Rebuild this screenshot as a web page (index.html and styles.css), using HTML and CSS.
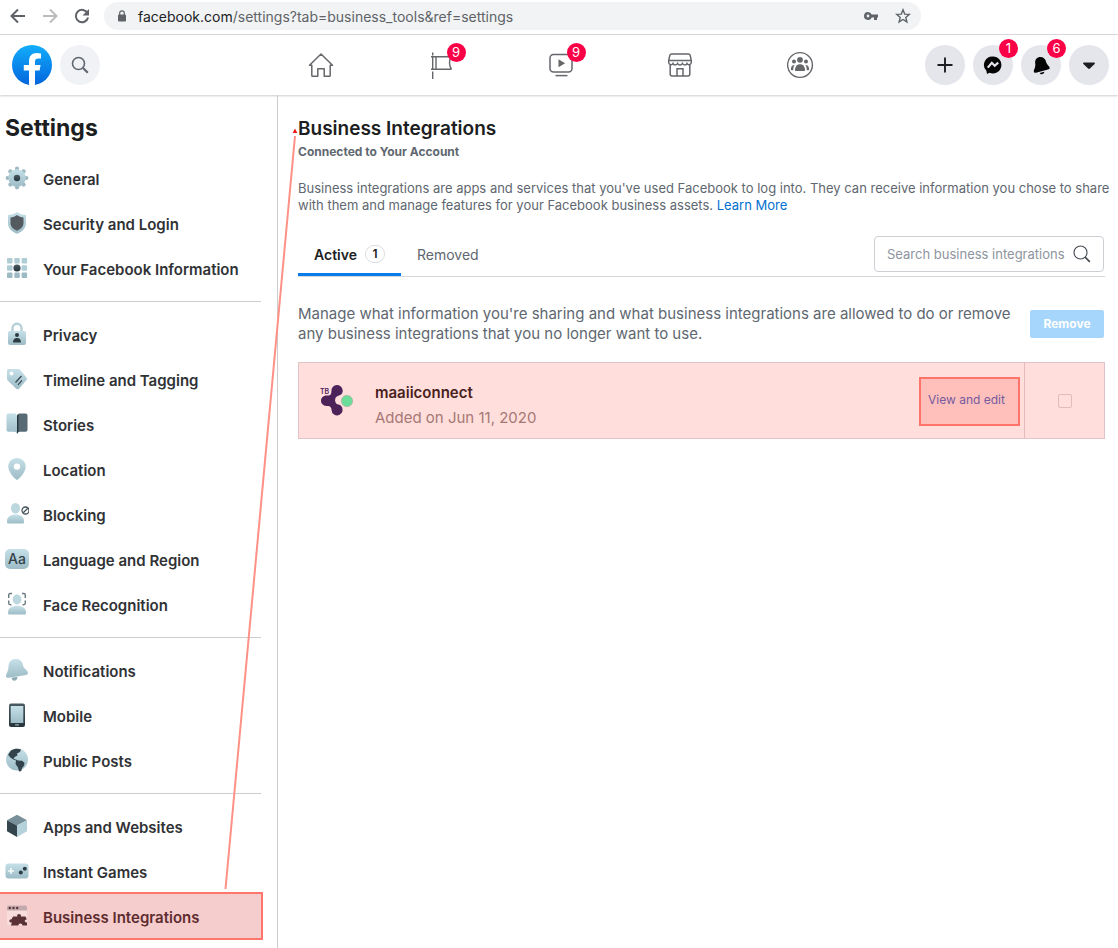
FILE: index.html
```html
<!DOCTYPE html>
<html lang="en">
<head>
<meta charset="utf-8">
<meta name="viewport" content="width=device-width, initial-scale=1">
<title>Settings - Business Integrations</title>
<link rel="stylesheet" href="styles.css">
</head>
<body>
<svg class="defs" width="0" height="0" aria-hidden="true">
  <defs>
    <linearGradient id="ice" x1="0" y1="0" x2="0" y2="1"><stop offset="0" stop-color="#c6e0e8"/><stop offset="1" stop-color="#9dbcc6"/></linearGradient>
    <linearGradient id="dark" x1="0" y1="0" x2="0" y2="1"><stop offset="0" stop-color="#4a5a62"/><stop offset="1" stop-color="#26353c"/></linearGradient>
    <linearGradient id="brand" x1="0" y1="0" x2="0" y2="1"><stop offset="0" stop-color="#12aefb"/><stop offset="1" stop-color="#0365dd"/></linearGradient>
  </defs>
</svg>

<div class="browser">
  <button class="browser-btn" aria-label="Back"><svg width="16" height="16" viewBox="0 0 16 16"><path d="M15 8H2M8 1.500L1.500 8L8 14.500" fill="none" stroke="#5f6368" stroke-width="2"/></svg></button>
  <button class="browser-btn" aria-label="Forward"><svg width="16" height="16" viewBox="0 0 16 16"><path d="M1 8h13M8 1.500L14.500 8L8 14.500" fill="none" stroke="#babcbe" stroke-width="2"/></svg></button>
  <button class="browser-btn" aria-label="Reload"><svg width="16" height="16" viewBox="0 0 16 16"><path d="M13.600 5.200A6.200 6.200 0 1 0 14.100 9.600" fill="none" stroke="#5f6368" stroke-width="2"/><path d="M15 1v6.500H8.500z" fill="#5f6368"/></svg></button>
  <div class="address">
    <svg width="10" height="12" viewBox="0 0 10 12"><rect x="1" y="4.500" width="8" height="7" rx="1" fill="#5f6368"/><path d="M2.700 5V3.100a2.300 2.300 0 0 1 4.600 0V5" fill="none" stroke="#5f6368" stroke-width="1.200"/></svg>
    <span class="url"><b>facebook.com</b>/settings?tab=business_tools&amp;ref=settings</span>
    <svg width="16" height="10" viewBox="0 0 16 10"><path d="M5 1a4 4 0 1 0 3.700 5.500H11V9h3V6.500h1V3.500H8.700A4 4 0 0 0 5 1zm0 2.600a1.400 1.400 0 1 1 0 2.800a1.400 1.400 0 0 1 0-2.800z" fill="#5f6368" fill-rule="evenodd"/></svg>
    <svg width="16" height="16" viewBox="0 0 16 16"><path d="M8 1.800l1.700 4.300 4.600.3-3.500 3 1.100 4.500L8 11.500l-3.900 2.400 1.100-4.500-3.500-3 4.600-.3z" fill="none" stroke="#5f6368" stroke-width="1.400"/></svg>
  </div>
</div>

<header class="topbar">
  <div class="topbar-left">
    <a href="#" aria-label="Facebook"><svg width="40" height="40" viewBox="0 0 40 40"><circle cx="20" cy="20" r="20" fill="url(#brand)"/><path d="M17 39.800V25.600h-5.200V20H17v-3.500C17 10.900 19.800 8 24.800 8c1.500 0 3 .2 4.200.5v4.900h-2.500c-2.700 0-3.500 1.200-3.500 3.300V20h5.600l-1 5.600H23v14.200a20 20 0 0 1-6 0z" fill="#fff"/></svg></a>
    <button class="round search-round" aria-label="Search"><svg width="18" height="18" viewBox="0 0 18 18"><circle cx="7.500" cy="7.500" r="6" fill="none" stroke="#606770" stroke-width="1.600"/><path d="M12 12l4.800 4.800" stroke="#606770" stroke-width="2.200"/></svg></button>
  </div>
  <nav class="topnav" aria-label="Main">
    <a href="#" aria-label="Home"><svg width="28" height="28" viewBox="0 0 28 28" fill="none" stroke="#65676b" stroke-width="1.500" stroke-linejoin="round"><path d="M4.800 14.200H2.500L14 3l11.500 11.200h-2.300v10.200c0 .6-.3.900-.9.900h-5.100v-7.600h-6.400v7.600H5.700c-.6 0-.9-.3-.9-.9z"/></svg></a>
    <a href="#" aria-label="Pages"><svg width="28" height="28" viewBox="0 0 28 28" fill="none" stroke="#65676b" stroke-width="1.400"><path d="M5.700 1.500v3M5.700 6v11.500M5.700 20.500V28M4 5.700h20M4 18.300h20.500M9 5.700v12.600M24 5.700c-2 4-2 8.500.5 12.600"/></svg><span class="badge">9</span></a>
    <a href="#" aria-label="Watch"><svg width="28" height="28" viewBox="0 0 28 28"><rect x="3" y="3.500" width="22" height="17.500" rx="3.500" fill="none" stroke="#65676b" stroke-width="1.500"/><path d="M11.500 8.200v8l6.600-4z" fill="#65676b"/><path d="M8.500 24.600h12" stroke="#65676b" stroke-width="1.500"/></svg><span class="badge">9</span></a>
    <a href="#" aria-label="Marketplace"><svg width="28" height="28" viewBox="0 0 28 28" fill="none" stroke="#65676b" stroke-width="1.500"><path d="M4.500 2.900h17c1 0 1.500.6 1.700 1.500l1.100 5.200v2c0 2.300-3.500 2.800-4.300.9-.9 1.900-3.600 1.900-4.600 0-.9 1.900-3.900 1.900-4.800 0-1 1.900-3.700 1.900-4.600 0-.8 1.900-4.300 1.400-4.300-.9v-2l1.100-5.200c.2-.9.700-1.500 1.700-1.500zM1.700 9.500h22.600M3.200 13.500V23c0 1.200.7 2 1.900 2h15.800c1.200 0 1.900-.8 1.900-2v-9.500M10 25v-7.300h6V25"/></svg></a>
    <a href="#" aria-label="Groups"><svg width="28" height="28" viewBox="1 0 28 28" fill="#65676b"><circle cx="14" cy="14" r="12.400" fill="none" stroke="#65676b" stroke-width="1.400"/><circle cx="14" cy="8.800" r="2.900"/><circle cx="8" cy="10.600" r="2"/><circle cx="20" cy="10.600" r="2"/><path d="M9 19.200c0-3.900 2-6 5-6s5 2.100 5 6c0 .6-.4.900-1 .9h-8c-.6 0-1-.3-1-.9z"/><path d="M8.600 14c-1 1.400-1.400 3-1.400 5.200H5.600c-.5 0-.7-.3-.7-.8 0-2.800 1.400-4.600 3.700-4.400zM19.400 14c1 1.400 1.400 3 1.400 5.200h1.600c.5 0 .7-.3.700-.8 0-2.800-1.400-4.600-3.700-4.400z"/></svg></a>
  </nav>
  <div class="topbar-right">
    <button class="round" aria-label="Create"><svg width="20" height="20" viewBox="0 0 20 20"><path d="M10 3.200v13.600M3.200 10h13.600" stroke="#1c1e21" stroke-width="1.900" stroke-linecap="round"/></svg></button>
    <button class="round" aria-label="Messenger"><svg width="20" height="20" viewBox="0 0 20 20"><path d="M10 1.400a8.500 8.500 0 1 1-3.500 16.300L4 19.100l-.6-3.300A8.500 8.500 0 0 1 10 1.400z" fill="#050505"/><path d="M4.800 12.600l4-4.800 2.900 3 3.500-3.200" fill="none" stroke="#e4e6eb" stroke-width="2.200"/></svg><span class="badge">1</span></button>
    <button class="round" aria-label="Notifications"><svg width="20" height="20" viewBox="0 0 20 20"><g transform="rotate(-8 10 10)"><path d="M4.500 7.500C4.500 3.500 7.500 1.500 10.500 2c3 .4 4.900 2.700 5 6 .1 2.400 2.700 4.200 2.700 6 0 1-1 1.400-2 1.500L4 16.900c-1.200.2-2-.3-2-1.400 0-1.800 2.500-3.500 2.500-8z" fill="#050505"/><path d="M7.600 17.700l4.800-.5c-.5 2.600-4.300 2.600-4.800.5z" fill="#050505"/></g></svg><span class="badge">6</span></button>
    <button class="round" aria-label="Account"><svg width="20" height="20" viewBox="0 0 20 20"><path d="M5 7.500h10c1 0 1.200.9.600 1.500l-4.700 4.600c-.6.500-1.200.5-1.800 0L4.400 9c-.6-.6-.4-1.500.6-1.500z" fill="#1c1e21"/></svg></button>
  </div>
</header>

<div class="page">
  <aside class="sidebar">
    <h2 class="sidebar-title">Settings</h2>
    <ul class="group">
      <li><a href="#"><svg width="24" height="24" viewBox="0 0 24 24"><g fill="#9fb9c3"><circle cx="12" cy="2.700" r="2.100"/><circle cx="12" cy="21.300" r="2.100"/><circle cx="2.700" cy="12" r="2.100"/><circle cx="21.300" cy="12" r="2.100"/><circle cx="5.400" cy="5.400" r="2.100"/><circle cx="18.600" cy="5.400" r="2.100"/><circle cx="5.400" cy="18.600" r="2.100"/><circle cx="18.600" cy="18.600" r="2.100"/></g><circle cx="12" cy="12" r="8.700" fill="url(#ice)"/><circle cx="12" cy="12" r="3.200" fill="url(#dark)"/></svg>General</a></li>
      <li><a href="#"><svg width="24" height="24" viewBox="0 0 24 24"><path d="M12 1c2.500 1.800 5.500 2.900 9 3v8c0 5.500-4 8.800-9 10.700C7 20.800 3 17.500 3 12V4c3.500-.1 6.500-1.200 9-3z" fill="url(#ice)"/><path d="M12 4c2 1.500 4 2.200 6.500 2.400V12c0 3.500-2.500 6-6.500 7.700C8 18 5.500 15.500 5.500 12V6.400C8 6.200 10 5.500 12 4z" fill="#535b61"/></svg>Security and Login</a></li>
      <li><a href="#"><svg width="24" height="24" viewBox="0 0 24 24"><g fill="#b0cdd6"><rect x="2" y="2" width="5.500" height="5.500" rx="1"/><rect x="9.300" y="2" width="5.500" height="5.500" rx="1"/><rect x="16.600" y="2" width="5.500" height="5.500" rx="1"/><rect x="2" y="9.300" width="5.500" height="5.500" rx="1"/><rect x="16.600" y="9.300" width="5.500" height="5.500" rx="1"/></g><g fill="#9dbac4"><rect x="2" y="16.600" width="5.500" height="5.500" rx="1"/><rect x="9.300" y="16.600" width="5.500" height="5.500" rx="1"/><rect x="16.600" y="16.600" width="5.500" height="5.500" rx="1"/></g><circle cx="12" cy="12" r="3.600" fill="url(#dark)"/></svg>Your Facebook Information</a></li>
    </ul>
    <ul class="group">
      <li><a href="#"><svg width="24" height="24" viewBox="0 0 24 24"><path d="M7.500 10V6.200a4.500 4.500 0 0 1 9 0V10" fill="none" stroke="#b6d0d9" stroke-width="2.400"/><rect x="3" y="9" width="18" height="14" rx="2" fill="url(#ice)"/><circle cx="12" cy="13" r="2" fill="#2d3b42"/><path d="M8 20.500c0-3.200 1.600-4.500 4-4.500s4 1.300 4 4.500z" fill="#2d3b42"/></svg>Privacy</a></li>
      <li><a href="#"><svg width="24" height="24" viewBox="0 0 24 24"><path d="M2 4c0-1.400.8-2 2-2h9c1 0 1.600.4 2.200 1l6.200 7.500c.8 1 .8 1.800 0 2.700L14 21.700c-.9.800-1.900.8-2.800 0L3.200 14c-.7-.6-1.200-1.200-1.200-2.200z" fill="url(#ice)"/><circle cx="6.500" cy="6.500" r="1.900" fill="#fff"/><path d="M10.500 15.500l6-6.500M13 17.800l4-4.500" stroke="#34444c" stroke-width="1.200"/></svg>Timeline and Tagging</a></li>
      <li><a href="#"><svg width="24" height="24" viewBox="0 0 24 24"><path d="M3.500 1.500H9c2 0 3 1 3 3V22c-.5-1.500-1.500-2.300-3-2.300H3.500c-1.200 0-2-.7-2-2V3.500c0-1.300.8-2 2-2z" fill="url(#ice)"/><path d="M20.500 1.500H15c-2 0-3 1-3 3V22c.5-1.500 1.500-2.300 3-2.300h5.500c1.200 0 2-.7 2-2V3.500c0-1.300-.8-2-2-2z" fill="#586a73"/><path d="M12 4.500c0-1 .6-1.800 1.400-2.300V20c-.8.500-1 1-1.400 2z" fill="#26353c"/></svg>Stories</a></li>
      <li><a href="#"><svg width="24" height="24" viewBox="0 0 24 24"><path d="M12 1c5 0 8.700 3.700 8.700 8.600 0 5.400-5.200 10.700-7.500 12.700-.8.700-1.600.7-2.400 0-2.300-2-7.500-7.300-7.500-12.700C3.300 4.700 7 1 12 1zm0 5.400a3.200 3.200 0 1 0 0 6.400a3.200 3.200 0 0 0 0-6.400z" fill="url(#ice)" fill-rule="evenodd"/></svg>Location</a></li>
      <li><a href="#"><svg width="24" height="24" viewBox="0 0 24 24"><ellipse cx="10.500" cy="6.200" rx="4.600" ry="5.200" fill="#bdd7df"/><path d="M2 19c0-4.300 3.700-6.500 8.500-6.500s8.500 2.200 8.500 6.500v1c0 1-.6 1.500-1.600 1.500H3.600C2.600 21.500 2 21 2 20z" fill="url(#ice)"/><circle cx="20.500" cy="8.500" r="3.500" fill="#fff" stroke="#46555d" stroke-width="1.300"/><path d="M18.200 10.800l4.600-4.600" stroke="#46555d" stroke-width="1.300"/></svg>Blocking</a></li>
      <li><a href="#"><span class="aa">Aa</span>Language and Region</a></li>
      <li><a href="#"><svg width="24" height="24" viewBox="0 0 24 24"><path d="M3.700 6V3.200c0-1 .6-1.700 1.700-1.700H7M3.700 8.500V11c0 1 .6 1.700 1.700 1.700h1M17 1.500h1.600c1.100 0 1.700.7 1.700 1.700V6M20.300 8.500V11c0 1-.6 1.700-1.700 1.700h-1" fill="none" stroke="#687980" stroke-width="1.400"/><ellipse cx="12" cy="7.500" rx="4.400" ry="5" fill="#bdd7df"/><path d="M3 20.500c0-4.500 4.200-6.700 9-6.700s9 2.200 9 6.700v.5c0 1-.6 1.500-1.600 1.500H4.600c-1 0-1.600-.5-1.600-1.500z" fill="url(#ice)"/></svg>Face Recognition</a></li>
    </ul>
    <ul class="group">
      <li><a href="#"><svg width="24" height="24" viewBox="0 0 24 24"><path d="M3.500 8.500C3.500 4 6.500 1 10.500 1c4.500 0 7 2.500 7.500 6.500.5 3.200 5 4.500 5 7.500 0 1.200-1 1.800-2 2L3.500 19.700C2 20 1 19.300 1 18c0-2.300 2.500-4.500 2.500-9.500z" fill="url(#ice)"/><path d="M6.500 19.700l6-1c0 5-5.500 5.300-6 1z" fill="#8eabb5"/></svg>Notifications</a></li>
      <li><a href="#"><svg width="24" height="24" viewBox="0 0 24 24"><rect x="4" y=".5" width="16" height="23.500" rx="2" fill="url(#dark)"/><rect x="5.700" y="3" width="12.600" height="17" fill="url(#ice)"/><rect x="10" y="21.300" width="4" height="1.300" rx=".6" fill="#9db0b7"/></svg>Mobile</a></li>
      <li><a href="#"><svg width="24" height="24" viewBox="0 0 24 24"><circle cx="12" cy="11.500" r="11" fill="url(#ice)"/><path d="M6 2.500c3-2 7-2.500 10-1l-1 2.500-3 1.500.5 2-2.500 1.200-1.500 2 3 1 1.500.8 4 .2 2.500 2-.5 3-2 2.300-.7 3-2.300.5-1-4-2.500-3.500.5-3.500C7.500 11.500 4 9 3.200 6.500z" fill="#33434b"/></svg>Public Posts</a></li>
    </ul>
    <ul class="group">
      <li><a href="#"><svg width="24" height="24" viewBox="0 0 24 24"><path d="M12 .8l10 5.500L12 11.500L2 6.300z" fill="#789099"/><path d="M2 6.300l10 5.200V23L2 17.200z" fill="#35454d"/><path d="M22 6.300l-10 5.200V23l10-5.800z" fill="#b5d2db"/></svg>Apps and Websites</a></li>
      <li><a href="#"><svg width="24" height="24" viewBox="0 0 24 24"><rect x=".5" y="4.500" width="23" height="15" rx="3" fill="url(#ice)"/><path d="M6 9v6M3 12h6" stroke="#f4fafb" stroke-width="1.600"/><circle cx="15.800" cy="13.500" r="2" fill="#2f3e46"/><circle cx="19.800" cy="9.700" r="2" fill="#2f3e46"/></svg>Instant Games</a></li>
      <li><a href="#" class="selected" aria-current="page"><svg width="24" height="24" viewBox="0 0 24 24"><rect x="2" y="1.500" width="20" height="20" rx="2" fill="#f8dcdb"/><path d="M2 6.500v-3c0-1.200.8-2 2-2h16c1.200 0 2 .8 2 2v3z" fill="#c3a9ad"/><g fill="#5a3236"><circle cx="4.800" cy="4" r="1.200"/><circle cx="8.500" cy="4" r="1.200"/><circle cx="12.200" cy="4" r="1.200"/><path d="M8 12.500h4.300c-1.200-3.200 4.600-3.200 3.600 0h4.600l1.300 3c-2.700-.2-2.700 3 .2 3v3h-4.500c-.2-2.700-4-2.700-4.200 0H5.800l1.200-3c-3.300.6-3.600-3.200-.5-3.200z"/></g></svg>Business Integrations</a></li>
    </ul>
  </aside>

  <main class="content">
    <h1>Business Integrations</h1>
    <p class="subtitle">Connected to Your Account</p>
    <p class="intro">Business integrations are apps and services that you've used Facebook to log into. They can receive information you chose to share with them and manage features for your Facebook business assets. <a href="#">Learn More</a></p>

    <div class="tabs">
      <button class="tab active">Active <span class="count">1</span></button>
      <button class="tab">Removed</button>
      <label class="search">
        <input type="text" placeholder="Search business integrations" aria-label="Search business integrations">
        <svg width="18" height="18" viewBox="0 0 18 18" fill="none" stroke="#444950"><circle cx="7.500" cy="7.500" r="6.500" stroke-width="1.100"/><path d="M12 12l4.800 4.800" stroke-width="1.700"/></svg>
      </label>
    </div>

    <div class="manage">
      <p>Manage what information you're sharing and what business integrations are allowed to do or remove any business integrations that you no longer want to use.</p>
      <button class="remove">Remove</button>
    </div>

    <section class="integration">
      <svg width="36" height="36" viewBox="0 0 36 36"><path d="M19 2a5.700 5.700 0 0 1 4.100 9.600c-1.700 1.600-4.100 1-5.300 3-1 1.700-1 4 .2 5.600 1.300 1.700 3.800 1 5.200 2.800A5.600 5.600 0 1 1 13.500 27c.2-2-1-3.600-3-4C7.500 23.500 3 22 3 17.700c0-4.200 4-5.700 7-5.200 2 .3 3.600-1.500 3.400-4A5.700 5.700 0 0 1 19 2z" fill="#4b2359"/><circle cx="29" cy="18" r="5.700" fill="#6cdc99" stroke="#b09b9b" stroke-width=".5"/><text x="2" y="11" class="logo-text">TB</text></svg>
      <div class="details">
        <strong>maaiiconnect</strong>
        <span>Added on Jun 11, 2020</span>
      </div>
      <a class="view" href="#">View and edit</a>
      <label class="pick"><input type="checkbox" aria-label="Select maaiiconnect"></label>
    </section>
  </main>
</div>

<svg class="arrow" width="80" height="770" viewBox="0 0 80 770" aria-hidden="true"><path d="M5.500 764L75 11" stroke="#ff9187" stroke-width="2" fill="none"/><path d="M75 3.500l2.300 4.500h-4.600z" fill="#f01616"/></svg>
</body>
</html>
```
FILE: styles.css
```css
* {
  box-sizing: border-box;
}

body {
  position: relative;
  min-height: 100vh;
  margin: 0;
  display: flex;
  flex-direction: column;
  background: #fff;
  color: #1c1e21;
  font-family: Inter, "Liberation Sans", sans-serif;
  font-size: 15px;
}

h1, h2, p, ul {
  margin: 0;
  padding: 0;
}

a {
  color: inherit;
  text-decoration: none;
}

button {
  border: 0;
  padding: 0;
  background: none;
  color: inherit;
  font: inherit;
}

svg {
  display: block;
  flex-shrink: 0;
}

.defs {
  position: absolute;
}

/* Browser bar */
.browser {
  display: flex;
  align-items: center;
  gap: 16px;
  padding: 2px 197px 4px 10px;
  border-bottom: 1px solid #d9dbdf;
}

.address {
  flex: 1;
  display: flex;
  align-items: center;
  gap: 16px;
  height: 28px;
  margin-left: -2px;
  padding: 0 10px 0 13px;
  border-radius: 14px;
  background: #f1f3f4;
}

.url {
  flex: 1;
  margin-left: -5px;
  color: #5f6368;
  font-size: 14px;
}

.url b {
  color: #202124;
  font-weight: 400;
}

/* Site header */
.topbar {
  display: grid;
  grid-template-columns: 1fr minmax(0, 600px) 1fr;
  align-items: center;
  height: 60px;
  padding: 0 9px 0 12px;
  box-shadow: 0 1px 2px rgba(0, 0, 0, 0.2);
}

.topbar-left, .topbar-right {
  display: flex;
  gap: 8px;
}

.topbar-right {
  justify-content: flex-end;
}

.topnav {
  display: grid;
  grid-template-columns: repeat(5, 1fr);
  justify-items: center;
}

.topnav a {
  position: relative;
}

.round {
  position: relative;
  display: grid;
  place-items: center;
  width: 40px;
  height: 40px;
  border-radius: 50%;
  background: #e4e6eb;
}

.search-round {
  background: #f0f2f5;
}

.badge {
  position: absolute;
  top: -8px;
  right: -11px;
  width: 19px;
  height: 19px;
  border-radius: 50%;
  background: #fa0046;
  color: #fff;
  font-size: 13px;
  line-height: 19px;
  text-align: center;
}

.round .badge {
  top: -6px;
  right: -5px;
}

/* Settings menu */
.page {
  flex: 1;
  display: flex;
}

.sidebar {
  flex: 0 0 278px;
  padding: 19px 16px 0 0;
  border-right: 1px solid #ccc;
}

.sidebar-title {
  margin: 0 0 15px 5px;
  font-size: 23px;
  font-weight: 700;
  line-height: 28px;
}

.group {
  margin-bottom: 11px;
  padding-bottom: 9px;
  border-bottom: 1px solid #ccc;
  list-style: none;
}

.group:last-child {
  margin: 0;
  padding: 0;
  border: 0;
}

.group a {
  display: flex;
  align-items: center;
  gap: 14px;
  height: 45px;
  padding-left: 5px;
  color: #303235;
  font-size: 15px;
  font-weight: 600;
}

.group svg, .aa {
  margin-bottom: 4px;
}

.aa {
  width: 24px;
  height: 20px;
  border-radius: 5px;
  background: linear-gradient(#c6e0e8, #9dbcc6);
  color: #33424a;
  font-size: 14px;
  font-weight: 500;
  line-height: 20px;
  text-align: center;
}

.group .selected {
  height: 44px;
  margin-top: -1px;
  padding-top: 3px;
  outline: 2px solid #ff766d;
  background: #f5cdcd;
  color: #5e2c2e;
}

/* Main column */
.content {
  flex: 1;
  min-width: 0;
  padding: 22px 13px 24px 20px;
}

h1 {
  font-size: 19px;
  font-weight: 600;
  line-height: 24px;
}

.subtitle {
  margin: 3px 0 20px;
  color: #606770;
  font-size: 12px;
  font-weight: 700;
  line-height: 16px;
}

.intro {
  margin-right: -10px;
  color: #606770;
  font-size: 13px;
  line-height: 17px;
}

.intro a {
  color: #0070d1;
}

.tabs {
  display: flex;
  align-items: center;
  gap: 16px;
  height: 63px;
  border-bottom: 1px solid #d5d8dd;
}

.tab {
  align-self: flex-end;
  display: flex;
  align-items: center;
  height: 43px;
  color: #606770;
  font-size: 14px;
}

.active {
  gap: 8px;
  padding: 2px 16px 0;
  border-bottom: 3px solid #0a7cea;
  color: #1c1e21;
  font-weight: 600;
}

.count {
  width: 20px;
  height: 18px;
  border: 1px solid #dadde1;
  border-radius: 9px;
  font-size: 12px;
  line-height: 16px;
}

.search {
  display: flex;
  align-items: center;
  width: 230px;
  height: 36px;
  margin: 17px 1px 0 auto;
  padding: 0 12px;
  border: 1px solid #ccd0d5;
  border-radius: 4px;
}

.search input {
  flex: 1;
  min-width: 0;
  padding: 0;
  border: 0;
  outline: 0;
  background: none;
  font: 13px Inter, "Liberation Sans", sans-serif;
}

.search input::placeholder {
  color: #8d949e;
}

.manage {
  display: flex;
  align-items: center;
  justify-content: space-between;
  gap: 16px;
  padding: 27px 1px 18px 0;
  color: #606770;
  line-height: 20px;
}

.remove {
  flex: 0 0 74px;
  height: 28px;
  border-radius: 2px;
  background: #a7d6fd;
  color: #fff;
  font-size: 12px;
  font-weight: 700;
}

.integration {
  display: flex;
  align-items: center;
  height: 77px;
  padding-left: 19px;
  border: 1px solid #dfc3c6;
  background: #ffdedc;
}

.details {
  flex: 1;
  display: grid;
  gap: 5px;
  padding: 9px 0 0 21px;
  color: #a67875;
  font-size: 15px;
  line-height: 20px;
}

.details strong {
  color: #491f20;
  font-weight: 600;
}

.view {
  width: 101px;
  height: 49px;
  margin: 2px 4px 0 0;
  padding-left: 7px;
  border: 2px solid #ff736a;
  background: #ffc0bc;
  color: #755a9e;
  font-size: 12px;
  line-height: 41px;
}

.pick {
  align-self: stretch;
  display: grid;
  place-items: center;
  width: 80px;
  border-left: 1px solid #e4babb;
}

.pick input {
  appearance: none;
  width: 14px;
  height: 14px;
  margin: 0;
  border: 1px solid #e2bbbc;
  border-radius: 2px;
}

.logo-text {
  fill: #4b2359;
  font-size: 7px;
  font-weight: 600;
}

.arrow {
  position: absolute;
  top: 125px;
  left: 220px;
  pointer-events: none;
}
```
